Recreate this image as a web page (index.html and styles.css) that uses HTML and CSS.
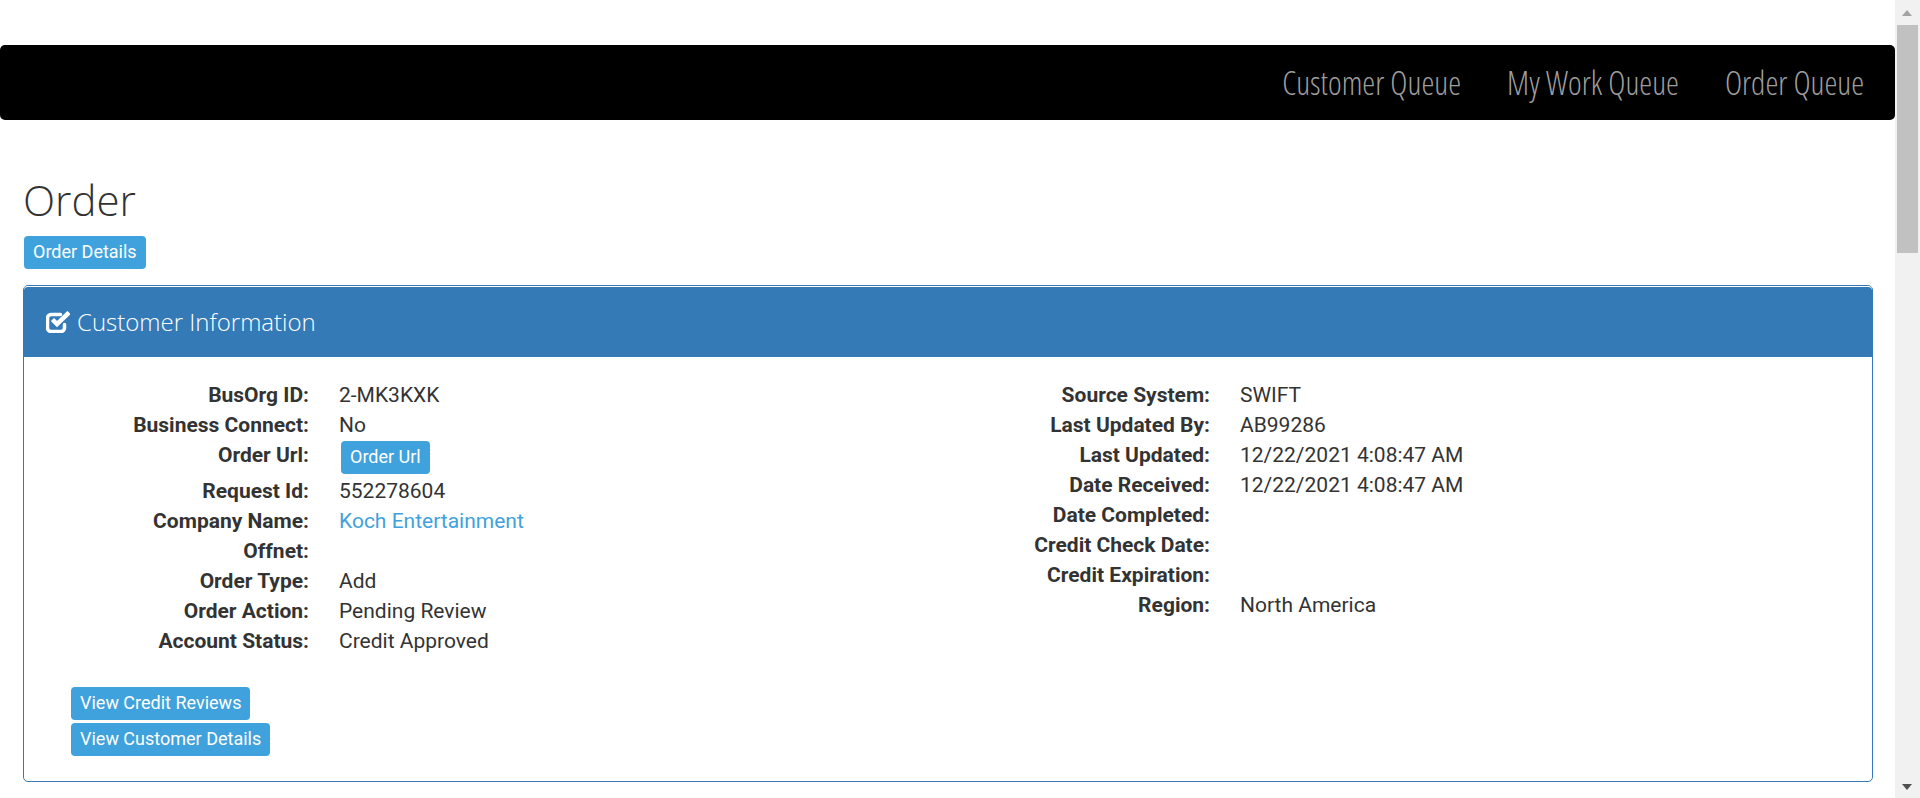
FILE: index.html
```html
<!DOCTYPE html>
<html lang="en">
<head>
    <meta charset="UTF-8">
    <title>Order</title>
    <link rel="stylesheet" href="styles.css">
</head>
<body>
    <div class="page">
        <nav class="navbar">
            <a href="#">Customer Queue</a>
            <a href="#">My Work Queue</a>
            <a href="#">Order Queue</a>
        </nav>

        <div class="content">
            <h1>Order</h1>
            <a href="#" class="btn">Order Details</a>

            <div class="panel">
                <div class="panel-heading">
                    <svg class="icon" viewBox="0 0 24 22" width="24" height="22">
                        <path d="M18.500 13.500v3.500a3.500 3.500 0 0 1-3.500 3.500H5a3.500 3.500 0 0 1-3.500-3.500V7A3.500 3.500 0 0 1 5 3.500h9.500" fill="none" stroke="#fff" stroke-width="3.500" stroke-linecap="round"/>
                        <path d="M6.500 8.500l4.500 4.500L23 1.500" fill="none" stroke="#fff" stroke-width="4.500"/>
                    </svg>
                    <span>Customer Information</span>
                </div>
                <div class="panel-body">
                    <div class="columns">
                        <dl class="details">
                            <dt>BusOrg ID:</dt><dd>2-MK3KXK</dd>
                            <dt>Business Connect:</dt><dd>No</dd>
                            <dt>Order Url:</dt><dd class="btn-row"><a href="#" class="btn">Order Url</a></dd>
                            <dt>Request Id:</dt><dd>552278604</dd>
                            <dt>Company Name:</dt><dd><a href="#" class="link">Koch Entertainment</a></dd>
                            <dt>Offnet:</dt><dd></dd>
                            <dt>Order Type:</dt><dd>Add</dd>
                            <dt>Order Action:</dt><dd>Pending Review</dd>
                            <dt>Account Status:</dt><dd>Credit Approved</dd>
                        </dl>
                        <dl class="details">
                            <dt>Source System:</dt><dd>SWIFT</dd>
                            <dt>Last Updated By:</dt><dd>AB99286</dd>
                            <dt>Last Updated:</dt><dd>12/22/2021 4:08:47 AM</dd>
                            <dt>Date Received:</dt><dd>12/22/2021 4:08:47 AM</dd>
                            <dt>Date Completed:</dt><dd></dd>
                            <dt>Credit Check Date:</dt><dd></dd>
                            <dt>Credit Expiration:</dt><dd></dd>
                            <dt>Region:</dt><dd>North America</dd>
                        </dl>
                    </div>
                    <div class="actions">
                        <a href="#" class="btn">View Credit Reviews</a>
                        <a href="#" class="btn">View Customer Details</a>
                    </div>
                </div>
            </div>
        </div>
    </div>

    <div class="scrollbar">
        <span class="arrow-up"></span>
        <div class="thumb"></div>
        <span class="arrow-down"></span>
    </div>
</body>
</html>
```

FILE: styles.css
```css
/* page frame */
html, body {
    height: 100%;
}

body {
    margin: 0;
    display: flex;
    overflow: hidden;
    font-family: Roboto, sans-serif;
    font-size: 21px;
    color: #333;
    background-color: #fff;
}

.page {
    flex: 1;
    min-width: 0;
    padding-top: 45px;
}

/* top navigation */
.navbar {
    height: 75px;
    display: flex;
    align-items: center;
    justify-content: flex-end;
    gap: 46px;
    padding-right: 31px;
    background-color: #000;
    border-radius: 5px;
}

.navbar a {
    font-family: "Open Sans", sans-serif;
    font-weight: 300;
    font-stretch: 75%;
    font-size: 32.600px;
    color: #9d9d9d;
    text-decoration: none;
}

.content {
    padding: 0 22px 0 23px;
}

h1 {
    margin: 57px 0 14px 0;
    font-family: "Open Sans", sans-serif;
    font-weight: 300;
    font-size: 42px;
    line-height: 45px;
}

.btn {
    display: inline-block;
    padding: 0 9px;
    height: 33px;
    line-height: 31px;
    font-size: 18px;
    color: #fff;
    background-color: #3fa2dc;
    border-radius: 4px;
    text-decoration: none;
}

.content > .btn {
    margin-left: 1px;
}

/* customer panel */
.panel {
    margin-top: 16px;
    border: 1px solid #337ab7;
    border-radius: 5px;
}

.panel-heading {
    height: 69px;
    display: flex;
    align-items: center;
    gap: 7px;
    padding-left: 22px;
    padding-bottom: 1px;
    font-family: "Open Sans", sans-serif;
    font-weight: 300;
    font-size: 24px;
    color: #fff;
    background-color: #337ab7;
    border-top: 1px solid #fff;
    border-radius: 4px 4px 0 0;
}

.panel-body {
    padding: 23px 0 25px 15px;
}

.columns {
    display: grid;
    grid-template-columns: 901px 900px;
}

.details {
    margin: 0;
    display: grid;
    grid-template-columns: 270px 1fr;
    align-content: start;
    column-gap: 30px;
    line-height: 30px;
}

.details dt {
    text-align: right;
    font-weight: 700;
}

.details dd {
    margin: 0;
}

.details .btn-row {
    padding: 1px 0 2px 2px;
}

.link {
    color: #3fa2dc;
    text-decoration: none;
}

.actions {
    margin-top: 31px;
    padding-left: 32px;
    display: flex;
    flex-direction: column;
    align-items: flex-start;
    gap: 3px;
}

/* window scrollbar */
.scrollbar {
    position: relative;
    width: 25px;
    flex-shrink: 0;
    background-color: #f1f1f1;
}

.thumb {
    position: absolute;
    top: 25px;
    left: 2px;
    width: 21px;
    height: 228px;
    background-color: #c1c1c1;
}

.arrow-up, .arrow-down {
    position: absolute;
    left: 7px;
    width: 0;
    height: 0;
    border-left: 5px solid transparent;
    border-right: 5px solid transparent;
}

.arrow-up {
    top: 10px;
    border-bottom: 6px solid #a3a3a3;
}

.arrow-down {
    bottom: 8px;
    border-top: 6px solid #505050;
}
```
